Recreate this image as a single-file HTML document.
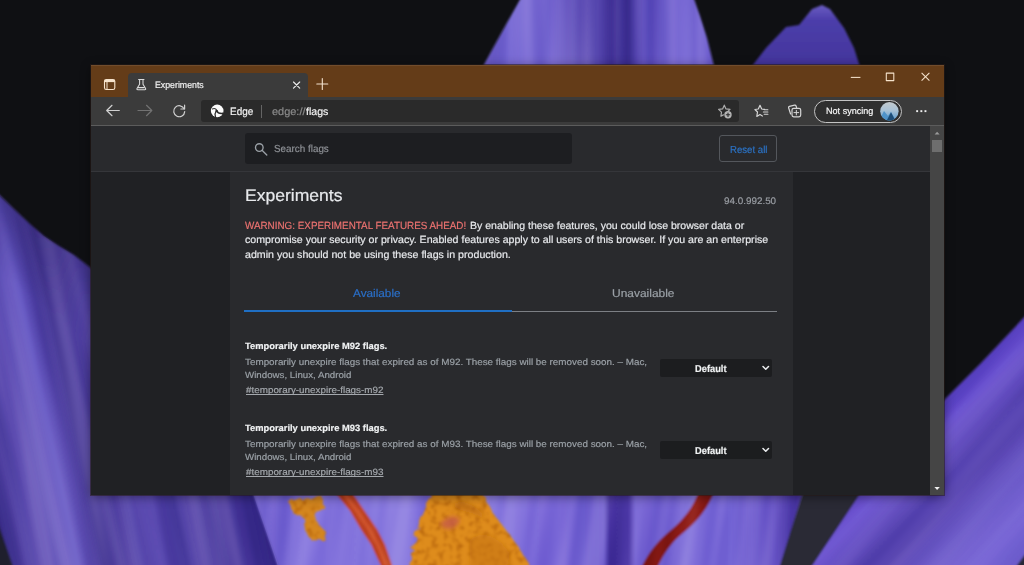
<!DOCTYPE html>
<html>
<head>
<meta charset="utf-8">
<title>Experiments</title>
<style>
*{box-sizing:border-box;margin:0;padding:0}
html,body{width:1024px;height:565px;overflow:hidden;background:#0f1013;font-family:"Liberation Sans",sans-serif;}
#wall,#ico{position:absolute;left:0;top:0;width:1024px;height:565px;}
#all{position:absolute;left:0;top:0;width:1024px;height:565px;overflow:hidden;filter:blur(0.4px);}
.r{position:absolute;}
.t{position:absolute;white-space:nowrap;line-height:20px;transform-origin:0 50%;text-rendering:geometricPrecision;-webkit-text-stroke:0.18px currentColor;}
</style>
</head>
<body>
<div id="all">
<svg id="wall" viewBox="0 0 1024 565">
  <defs>
    <filter id="b1" x="-5%" y="-5%" width="110%" height="110%"><feGaussianBlur stdDeviation="0.9"/></filter>
    <filter id="b2" x="-10%" y="-10%" width="120%" height="120%"><feGaussianBlur stdDeviation="2"/></filter>
    <filter id="b4" x="-20%" y="-20%" width="140%" height="140%"><feGaussianBlur stdDeviation="4"/></filter>
    <filter id="rough" x="-5%" y="-5%" width="110%" height="110%">
      <feTurbulence type="fractalNoise" baseFrequency="0.18" numOctaves="2" seed="3" result="n"/>
      <feDisplacementMap in="SourceGraphic" in2="n" scale="7"/>
      <feGaussianBlur stdDeviation="0.7"/>
    </filter>
    <linearGradient id="gTop" x1="482" y1="0" x2="714" y2="0" gradientUnits="userSpaceOnUse">
      <stop offset="0" stop-color="#6a5ac4"/><stop offset=".12" stop-color="#7c6ed6"/><stop offset=".3" stop-color="#7666d0"/><stop offset=".42" stop-color="#5e4eb6"/>
      <stop offset=".5" stop-color="#5646ae"/><stop offset=".56" stop-color="#3e2e94"/><stop offset=".63" stop-color="#43349a"/><stop offset=".7" stop-color="#6252c0"/><stop offset=".86" stop-color="#7868d4"/><stop offset="1" stop-color="#7464d0"/>
    </linearGradient>
    <linearGradient id="gSmall" x1="0" y1="5" x2="0" y2="66" gradientUnits="userSpaceOnUse">
      <stop offset="0" stop-color="#6a5cc2"/><stop offset=".25" stop-color="#4c3eaa"/><stop offset="1" stop-color="#43359c"/>
    </linearGradient>
    <!-- left petal: gradient perpendicular to streaks (streak dir ~ (0.27,0.96)) -->
    <linearGradient id="gLeft" x1="-36.2" y1="407.7" x2="227.9" y2="351.5" gradientUnits="userSpaceOnUse">
      <stop offset="0.000" stop-color="#3e3090"/><stop offset="0.111" stop-color="#5646a8"/><stop offset="0.222" stop-color="#6252b8"/><stop offset="0.293" stop-color="#6c5ec6"/><stop offset="0.341" stop-color="#5a4aae"/><stop offset="0.389" stop-color="#483a96"/><stop offset="0.444" stop-color="#4c3c9c"/><stop offset="0.519" stop-color="#5848ac"/><stop offset="0.593" stop-color="#5e4eb4"/><stop offset="0.704" stop-color="#5646aa"/><stop offset="0.833" stop-color="#4a3a9c"/><stop offset="0.963" stop-color="#44349a"/><stop offset="1.000" stop-color="#3e2e92"/>
    </linearGradient>
    <linearGradient id="gBot" x1="250" y1="0" x2="810" y2="0" gradientUnits="userSpaceOnUse">
      <stop offset="0" stop-color="#7666d0"/><stop offset=".1" stop-color="#8272dc"/><stop offset=".3" stop-color="#8676de"/><stop offset=".55" stop-color="#7c6ad8"/>
      <stop offset=".632" stop-color="#7464d0"/><stop offset=".642" stop-color="#4632a0"/><stop offset=".676" stop-color="#4a36a4"/><stop offset=".688" stop-color="#7c6ad6"/>
      <stop offset=".86" stop-color="#8474dc"/><stop offset=".935" stop-color="#6450c4"/><stop offset=".965" stop-color="#4a36a6"/><stop offset="1" stop-color="#3e2c94"/>
    </linearGradient>
    <linearGradient id="gRight" x1="943" y1="402" x2="1066" y2="520" gradientUnits="userSpaceOnUse">
      <stop offset="0" stop-color="#5e44c4"/><stop offset=".1" stop-color="#6a52d0"/><stop offset=".3" stop-color="#5a46b4"/><stop offset=".42" stop-color="#5844b0"/><stop offset=".6" stop-color="#6c5ac8"/><stop offset=".82" stop-color="#7c6ad8"/><stop offset="1" stop-color="#7262ce"/>
    </linearGradient>
    <linearGradient id="gRed1" x1="0" y1="0" x2="1" y2="0">
      <stop offset="0" stop-color="#a83018"/><stop offset=".5" stop-color="#cc4a26"/><stop offset="1" stop-color="#9c2a16"/>
    </linearGradient>

    <filter id="streak" x="0" y="0" width="100%" height="100%" color-interpolation-filters="sRGB">
      <feTurbulence type="fractalNoise" baseFrequency="0.045 0.003" numOctaves="2" seed="11"/>
      <feColorMatrix type="matrix" values="2.0 0 0 0 -0.5  2.0 0 0 0 -0.5  2.0 0 0 0 -0.5  0 0 0 0 1"/>
      <feGaussianBlur stdDeviation="1.2"/>
    </filter>
    <filter id="bumps" x="-5%" y="-5%" width="110%" height="110%" color-interpolation-filters="sRGB">
      <feTurbulence type="fractalNoise" baseFrequency="0.16" numOctaves="2" seed="5" result="n"/>
      <feDisplacementMap in="SourceGraphic" in2="n" scale="7" result="d"/>
      <feColorMatrix in="n" type="matrix" values="0 0 0 0 0.72  0 0 0 0 0.40  0 0 0 0 0.05  -3.0 0 0 0 1.55" result="dk"/>
      <feComposite in="dk" in2="d" operator="in" result="dk2"/>
      <feMerge><feMergeNode in="d"/><feMergeNode in="dk2"/></feMerge>
      <feGaussianBlur stdDeviation="0.8"/>
    </filter>

    <linearGradient id="gLeftDark" x1="45" y1="232" x2="7" y2="279" gradientUnits="userSpaceOnUse">
      <stop offset="0" stop-color="#1a1050" stop-opacity=".3"/><stop offset=".5" stop-color="#1a1050" stop-opacity=".14"/><stop offset="1" stop-color="#1a1050" stop-opacity="0"/>
    </linearGradient>
    <clipPath id="cLeft"><path d="M-6,190 L15,210 L30,224 L44,236 L59,246 L74,255 L96,272 L96,488 L251,488 L281,575 L-6,575 Z"/></clipPath>
    <clipPath id="cBot"><path d="M252,488 L806,488 L778,575 L282,575 Z"/></clipPath>
    <clipPath id="cRight"><path d="M938,406 L981,363 L1032,309 L1032,575 L806,575 L864,488 L938,488 Z"/></clipPath>
    <clipPath id="cTop"><path d="M481,70 L503,30 L522,-4 L693,-4 L700,16 L707,38 L715,70 Z"/></clipPath>
  </defs>
  <rect width="1024" height="565" fill="#0f1013"/>
  <g filter="url(#b1)">
    <!-- top petal -->
    <path d="M481,70 L503,30 L522,-4 L693,-4 L700,16 L707,38 L715,70 Z" fill="url(#gTop)"/>
    <!-- small petal -->
    <path d="M749,70 L766,48 L786,27 L799,25 L812,9 L822,5 L830,9 L844,28 L854,48 L861,70 Z" fill="url(#gSmall)"/>
    <!-- bottom lavender strip -->
    <path d="M240,488 L806,488 L778,575 L260,575 Z" fill="url(#gBot)"/>
    <!-- left petal (beside + below window) -->
    <path d="M-6,190 L15,210 L30,224 L44,236 L59,246 L74,255 L96,272 L96,488 L251,488 L281,575 L-6,575 Z" fill="url(#gLeft)"/>
    <path d="M-6,190 L15,210 L30,224 L44,236 L59,246 L74,255 L96,272 L96,340 L-6,340 Z" fill="url(#gLeftDark)"/>
    <!-- wedge -->
    <path d="M804,488 L866,488 L808,575 L777,575 Z" fill="#2a2c36"/>
    <!-- right petal -->
    <path d="M938,406 L981,363 L1032,309 L1032,575 L806,575 L864,488 L938,488 Z" fill="url(#gRight)"/>
    <!-- dark corners -->
    <path d="M-6,512 L16,575 L-6,575 Z" fill="#2a2b3a"/>
    <path d="M1010,575 L1032,545 L1032,575 Z" fill="#2a2b3a"/>
    <!-- red stigmas -->
    <path d="M332,488 L350,488 L354.5,496 L366.7,514 L377,529 L385,544.5 L391.8,564 L395,575 L385,575 L380,564 L371,544.5 L360.6,529 L350,511 L337.9,496 Z" fill="#bd4222"/>
    <path d="M341,488 L346,496 L358.5,513 L369,529 L378,545 L386,565" fill="none" stroke="#d65a30" stroke-width="3.5" opacity=".75"/>
    <path d="M700,488 L716,488 C707,510 697,522 683,533 C670,543 662,556 654,575 L638,575 C648,552 658,541 670,531 C684,519 693,508 700,488 Z" fill="#8c1a12"/>
  </g>

  <g style="mix-blend-mode:soft-light" opacity=".32">
    <g clip-path="url(#cLeft)"><rect x="-200" y="-100" width="700" height="900" transform="rotate(-12 100 400)" filter="url(#streak)"/></g>
    <g clip-path="url(#cBot)"><rect x="200" y="300" width="700" height="500" transform="rotate(8 500 530)" filter="url(#streak)"/></g>
    <g clip-path="url(#cRight)" opacity=".5"><rect x="600" y="100" width="700" height="700" transform="rotate(42 950 450)" filter="url(#streak)"/></g>
    <g clip-path="url(#cTop)"><rect x="400" y="-50" width="400" height="200" filter="url(#streak)"/></g>
  </g>
  <!-- orange stamens -->
  <g filter="url(#bumps)">
    <path d="M289,502 L300,498 L312,499 L322,496 L324,506 L314,514 L318,524 L326,532 L324,540 L312,541 L305,530 L304,518 L294,514 Z" fill="#d4861e"/>
    <path d="M432,492 L450,488 L480,488 L492,512 L512,538 L528,562 L530,580 L410,580 L411,556 L418,527 Z" fill="#de8c1c"/>
  </g>
  <g filter="url(#b2)">
    <path d="M452,505 C462,498 478,505 486,520 C475,512 462,512 452,505 Z" fill="#b86a14" opacity=".7"/>
    <path d="M440,524 C446,516 456,514 460,520 C456,530 446,532 440,524 Z" fill="#c45a48" opacity=".8"/>
    <path d="M470,540 C480,530 500,535 510,555 L505,575 L470,575 Z" fill="#c67412" opacity=".6"/>
  </g>
</svg>

<!-- window -->
<div class="r" style="left:91px;top:65px;width:853px;height:430px;background:#202124;box-shadow:0 0 0 1px rgba(40,28,24,.55),0 2px 10px rgba(0,0,0,.45);"></div>
<!-- title bar -->
<div class="r" style="left:91px;top:65px;width:853px;height:32px;background:#643c18;"></div>
<div class="r" id="titletop" style="left:91px;top:65px;width:853px;height:1px;background:rgba(255,255,255,.09);"></div>
<!-- tab -->
<div class="r" style="left:127.5px;top:73px;width:180.5px;height:24.5px;background:#3b3b3b;border-radius:4px 4px 0 0;"></div>
<!-- toolbar -->
<div class="r" style="left:91px;top:97px;width:853px;height:28.5px;background:#3b3b3b;"></div>
<div class="r" style="left:91px;top:125px;width:853px;height:1px;background:#5c5c5c;"></div>
<!-- address bar -->
<div class="r" style="left:200.5px;top:100px;width:538.5px;height:22px;background:#2a2a2a;border-radius:3px;"></div>
<div class="r" style="left:261px;top:105px;width:1px;height:12.5px;background:#646464;"></div>
<!-- profile pill -->
<div class="r" style="left:814px;top:99.5px;width:88px;height:23.5px;border:1.4px solid #c4c4c4;border-radius:12px;background:#2f2f2f;"></div>
<!-- page header -->
<div class="r" style="left:91px;top:126px;width:839px;height:44.5px;background:#292a2d;"></div>
<div class="r" style="left:91px;top:170.5px;width:839px;height:1px;background:#35363a;"></div>
<!-- search box -->
<div class="r" style="left:245px;top:132.5px;width:326.5px;height:31.5px;background:#1d1e21;border-radius:3px;"></div>
<!-- reset button -->
<div class="r" style="left:719.2px;top:135.2px;width:57.4px;height:27.2px;border:1px solid #54575c;border-radius:3px;"></div>
<!-- content column -->
<div class="r" style="left:230px;top:171.5px;width:562.5px;height:323.5px;background:#292a2d;"></div>
<!-- tab underline -->
<div class="r" style="left:244px;top:311px;width:532.5px;height:1.2px;background:#7c7f84;"></div>
<div class="r" style="left:244px;top:310.3px;width:268px;height:2.2px;background:#1f6fc4;"></div>
<!-- selects -->
<div class="r" style="left:659.5px;top:358.6px;width:112.4px;height:18.1px;background:#1c1d1f;border-radius:2px;"></div>
<div class="r" style="left:659.5px;top:440.6px;width:112.4px;height:18.1px;background:#1c1d1f;border-radius:2px;"></div>
<!-- scrollbar -->
<div class="r" style="left:929.5px;top:126px;width:14.5px;height:369px;background:#454545;"></div>
<div class="r" style="left:931.5px;top:139.5px;width:10px;height:12.5px;background:#6e6e6e;"></div>
<svg id="ico" viewBox="0 0 1024 565" fill="none" stroke-linecap="round" stroke-linejoin="round">
  <defs>
    <clipPath id="avc"><circle cx="889.4" cy="111.2" r="9.2"/></clipPath>
    <linearGradient id="avg" x1="0" y1="0" x2="0" y2="1">
      <stop offset="0" stop-color="#c3c9cc"/><stop offset=".45" stop-color="#a9c2d6"/><stop offset="1" stop-color="#5b9bcf"/>
    </linearGradient>
  </defs>
  <!-- tab actions -->
  <g stroke="#f6e3cc" stroke-width="1.1">
    <rect x="104.5" y="79.5" width="10.3" height="10" rx="1.8"/>
    <path d="M104.5,81 H114.8" stroke-width="2.2" stroke-linecap="butt"/>
    <path d="M107,82 V89.5" stroke-width="1"/>
  </g>
  <!-- flask -->
  <g stroke="#dcdcdc" stroke-width="1.05">
    <path d="M138.6,79.5 H144"/>
    <path d="M139.6,79.6 V84.3 L137,88.6 Q136.6,89.7 137.8,89.7 H144.8 Q146,89.7 145.6,88.6 L143,84.3 V79.6"/>
    <path d="M138.4,87.6 H144.2" stroke-width="1.3"/>
  </g>
  <!-- tab close -->
  <path d="M293.5,82 L299.7,88.2 M299.7,82 L293.5,88.2" stroke="#ececec" stroke-width="1.15"/>
  <!-- new tab -->
  <path d="M316.8,84 H327.8 M322.3,78.5 V89.5" stroke="#f3e2cf" stroke-width="1.1"/>
  <!-- back -->
  <path d="M119.3,110.5 H106.8 M112,105.3 L106.7,110.5 L112,115.7" stroke="#d0d0d0" stroke-width="1.2"/>
  <!-- forward -->
  <path d="M138,110.5 H151.6 M146.5,105.3 L151.8,110.5 L146.5,115.7" stroke="#727272" stroke-width="1.2"/>
  <!-- refresh -->
  <g stroke="#d0d0d0" stroke-width="1.2">
    <path d="M184.2,108.9 A5.5,5.5 0 1 0 184.7,111.6"/>
    <path d="M184.6,105.2 V109 H180.9"/>
  </g>
  <!-- edge logo -->
  <g>
    <circle cx="217.2" cy="110.9" r="6.3" fill="#fbfbfb"/>
    <circle cx="216.6" cy="110.9" r="1.2" fill="#2a2a2a"/>
    <path d="M216.7,110.4 C216.2,108.8 214.4,107.9 212.4,108.9" stroke="#343434" stroke-width="1.1"/>
    <path d="M216.8,111 C217.6,112.9 218.8,113.9 222.9,113.4" stroke="#2a2a2a" stroke-width="1.7"/>
    <path d="M216.1,111.4 C215,112.8 214.7,114.6 215.5,116.8" stroke="#2e2e2e" stroke-width="1.25"/>
  </g>
  <!-- star add -->
  <g stroke="#adadad" stroke-width="1.2">
    <path d="M724.3,105.2 L726,108.9 L730,109.4 L727.6,111.6 M720.9,116.2 L721.5,112.1 L718.6,109.4 L722.6,108.9 L724.3,105.2 M720.9,116.2 L723.4,114.9"/>
    <circle cx="728" cy="114.7" r="3.7" fill="#b4b4b4" stroke="none"/>
    <path d="M726.3,114.7 H729.7 M728,113 V116.4" stroke="#2a2a2a" stroke-width="1.1"/>
  </g>
  <!-- favorites -->
  <g stroke="#d6d6d6" stroke-width="1.2">
    <path d="M760,105.3 L761.7,109 L764.6,109.4 M760,105.3 L758.3,109 L754.9,109.5 L757.5,112 L756.8,116.4 L760,114.6 L762.4,116"/>
    <path d="M764.4,109.8 H767.9 M763.4,112 H767.9 M764.2,114.2 H767.9" stroke-width="1.1"/>
  </g>
  <!-- collections -->
  <g stroke="#d6d6d6" stroke-width="1.2">
    <path d="M790.6,114 L788.6,107.8 Q788.3,106.7 789.4,106.4 L794.6,105.2 Q795.7,105 796.1,106 L796.6,107.6"/>
    <rect x="792" y="108.4" width="8.7" height="8.4" rx="1.7"/>
    <path d="M796.35,110.3 V114.9 M794,112.6 H798.7" stroke-width="1"/>
  </g>
  <!-- avatar -->
  <g clip-path="url(#avc)">
    <rect x="880" y="101.8" width="19" height="19" fill="url(#avg)"/>
    <path d="M879,121 L884,111 L888,116 L891,112 L896,121 Z" fill="#4f93c9"/>
    <path d="M886.5,121 L891,112.2 L895.6,121 Z" fill="#1e4d77"/>
  </g>
  <!-- ellipsis -->
  <g fill="#f0f0f0"><rect x="916.2" y="110.2" width="1.9" height="1.9"/><rect x="920.4" y="110.2" width="1.9" height="1.9"/><rect x="924.5" y="110.2" width="1.9" height="1.9"/></g>
  <!-- window controls -->
  <g stroke="#f6e3cc" stroke-width="1.05" stroke-linecap="butt">
    <path d="M850.8,77.4 H860.4"/>
    <rect x="886.3" y="73.1" width="7.5" height="7.5"/>
    <path d="M921.6,72.9 L929.4,80.7 M929.4,72.9 L921.6,80.7"/>
  </g>
  <!-- search icon -->
  <g stroke="#9aa0a6" stroke-width="1.35">
    <circle cx="259.3" cy="147.5" r="3.8"/>
    <path d="M262.3,150.5 L266.8,155"/>
  </g>
  <!-- scrollbar arrows -->
  <path d="M934.6,134.4 L937.1,131.8 L939.6,134.4 Z" fill="#9a9a9a"/>
  <path d="M934.4,487 L937.1,490 L939.8,487 Z" fill="#f0f0f0"/>
  <!-- select chevrons -->
  <path d="M763,366.5 L765.75,369.3 L768.5,366.5" stroke="#eceef0" stroke-width="1.5"/>
  <path d="M763,448.5 L765.75,451.3 L768.5,448.5" stroke="#eceef0" stroke-width="1.5"/>
</svg>

<span class="t" style="left:155.2px;top:74.80px;font-size:9.3px;color:#f2f2f2;transform:scaleX(0.9425);">Experiments</span>
<span class="t" style="left:229.7px;top:102.00px;font-size:10.8px;color:#f5f5f5;transform:scaleX(0.9200);">Edge</span>
<span class="t" style="left:271.7px;top:101.80px;font-size:10.5px;color:#8c8c8c;transform:scaleX(1.0428);">edge://</span>
<span class="t" style="left:305.8px;top:101.80px;font-size:10.5px;color:#f5f5f5;transform:scaleX(1.0051);">flags</span>
<span class="t" style="left:826.1px;top:101.30px;font-size:9.2px;color:#f7f7f7;transform:scaleX(0.9872);">Not syncing</span>
<span class="t" style="left:273.6px;top:140.40px;font-size:10.2px;color:#8e9196;transform:scaleX(0.9675);">Search flags</span>
<span class="t" style="left:729.5px;top:140.50px;font-size:10.2px;color:#2b73c6;transform:scaleX(0.9435);">Reset all</span>
<span class="t" style="left:245.2px;top:186.10px;font-size:16.9px;color:#e8eaed;transform:scaleX(1.0386);">Experiments</span>
<span class="t" style="left:723.8px;top:191.80px;font-size:9.5px;color:#9a9ea4;transform:scaleX(1.0381);">94.0.992.50</span>
<span class="t" style="left:244.8px;top:216.70px;font-size:10.4px;color:#ec7270;transform:scaleX(0.9483);">WARNING: EXPERIMENTAL FEATURES AHEAD!</span>
<span class="t" style="left:469.8px;top:216.70px;font-size:10.4px;color:#e8eaed;transform:scaleX(1.0143);">By enabling these features, you could lose browser data or</span>
<span class="t" style="left:244.8px;top:231.30px;font-size:10.4px;color:#e8eaed;transform:scaleX(1.0194);">compromise your security or privacy. Enabled features apply to all users of this browser. If you are an enterprise</span>
<span class="t" style="left:244.8px;top:245.60px;font-size:10.4px;color:#e8eaed;transform:scaleX(1.0248);">admin you should not be using these flags in production.</span>
<span class="t" style="left:353.3px;top:283.80px;font-size:11.2px;color:#2a6fc8;transform:scaleX(1.0530);">Available</span>
<span class="t" style="left:611.9px;top:284.00px;font-size:11.2px;color:#9aa0a6;transform:scaleX(1.0689);">Unavailable</span>
<span class="t" style="left:244.8px;top:335.60px;font-size:9.1px;font-weight:700;color:#f1f3f4;transform:scaleX(1.0281);">Temporarily unexpire M92 flags.</span>
<span class="t" style="left:244.8px;top:351.90px;font-size:9.1px;color:#9aa0a6;transform:scaleX(1.0843);">Temporarily unexpire flags that expired as of M92. These flags will be removed soon. – Mac,</span>
<span class="t" style="left:244.8px;top:365.40px;font-size:9.1px;color:#9aa0a6;transform:scaleX(1.0685);">Windows, Linux, Android</span>
<span class="t" style="left:246.3px;top:380.40px;font-size:9.1px;color:#a4a8ad;transform:scaleX(1.0837);text-decoration:underline;text-underline-offset:1px;">#temporary-unexpire-flags-m92</span>
<span class="t" style="left:694.7px;top:359.60px;font-size:10.0px;font-weight:700;color:#f1f3f4;transform:scaleX(0.9290);">Default</span>
<span class="t" style="left:244.8px;top:417.60px;font-size:9.1px;font-weight:700;color:#f1f3f4;transform:scaleX(1.0281);">Temporarily unexpire M93 flags.</span>
<span class="t" style="left:244.8px;top:433.90px;font-size:9.1px;color:#9aa0a6;transform:scaleX(1.0843);">Temporarily unexpire flags that expired as of M93. These flags will be removed soon. – Mac,</span>
<span class="t" style="left:244.8px;top:447.40px;font-size:9.1px;color:#9aa0a6;transform:scaleX(1.0685);">Windows, Linux, Android</span>
<span class="t" style="left:246.3px;top:462.40px;font-size:9.1px;color:#a4a8ad;transform:scaleX(1.0837);text-decoration:underline;text-underline-offset:1px;">#temporary-unexpire-flags-m93</span>
<span class="t" style="left:694.7px;top:441.60px;font-size:10.0px;font-weight:700;color:#f1f3f4;transform:scaleX(0.9290);">Default</span>
</div>
</body>
</html>
